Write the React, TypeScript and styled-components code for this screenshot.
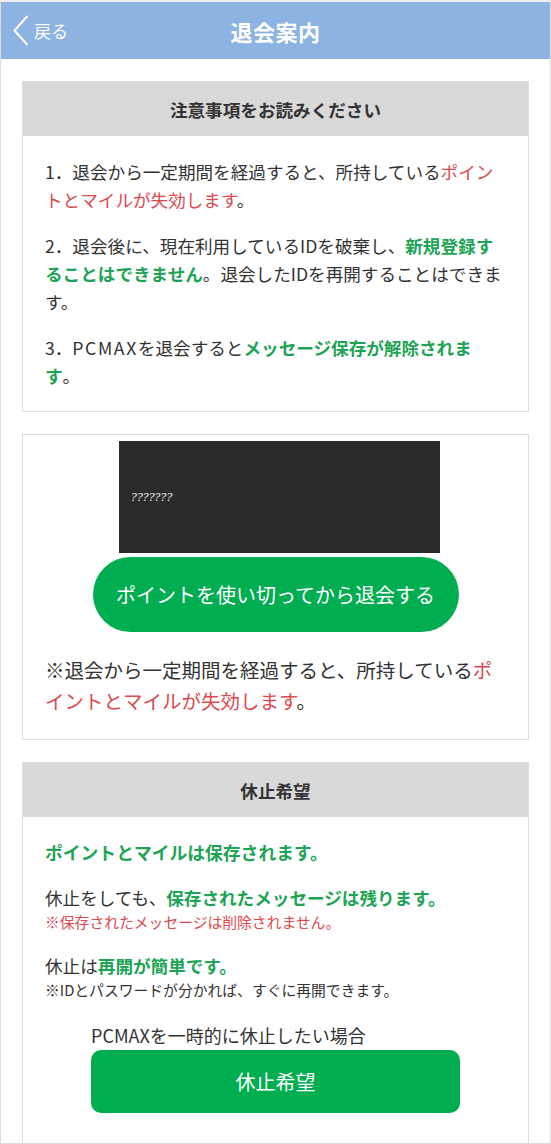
import React from "react";
import styled, { createGlobalStyle } from "styled-components";

const GlobalStyle = createGlobalStyle`
  html, body { margin: 0; padding: 0; background: #fff; }
  body {
    font-family: "Noto Sans CJK JP", "Noto Sans", sans-serif;
    color: #333;
    line-break: strict;
  }
  * { box-sizing: border-box; }
`;

const Frame = styled.div`
  width: 551px;
  height: 1144px;
  overflow: hidden;
  border: 1px solid #dcdcdc;
  border-top: 2px solid #eeeeee;
  background: #fff;
`;

const Header = styled.header`
  position: relative;
  height: 57px;
  background: #8db3e2;
  display: flex;
  align-items: center;
  justify-content: center;
`;

const Back = styled.div`
  position: absolute;
  left: 11px;
  top: 0;
  bottom: 0;
  display: flex;
  align-items: center;
  gap: 5px;
  color: #fff;
  font-size: 17px;
`;

const Title = styled.h1`
  margin: 0;
  color: #fff;
  font-size: 22px;
  font-weight: 700;
  letter-spacing: 0.5px;
`;

const Main = styled.main`
  display: flex;
  flex-direction: column;
  gap: 22px;
  padding: 22px 21px 0;
`;

const Card = styled.section`
  border: 1px solid #dedede;
  background: #fff;
`;

const CardHead = styled.div`
  height: 54px;
  background: #d9d9d9;
  display: flex;
  align-items: center;
  justify-content: center;
  font-size: 17.6px;
  font-weight: 700;
  color: #333;
`;

const List = styled.ol`
  list-style: none;
  margin: 0;
  padding: 22px 22px 21px;
  display: flex;
  flex-direction: column;
  gap: 18px;
`;

const Item = styled.li`
  font-size: 17.6px;
  line-height: 28px;
  color: #333;
`;

const Red = styled.span`
  color: #dc4a4f;
`;

const Green = styled.strong`
  color: #1ea456;
  font-weight: 700;
`;

const Latin = styled.span`
  letter-spacing: 1.6px;
`;

const CenterBody = styled.div`
  display: flex;
  flex-direction: column;
  align-items: center;
  padding: 6px 22px 23px;
`;

const Banner = styled.div`
  width: 321px;
  height: 112px;
  background: #2b2b2b;
  color: #f0f0f0;
  font-family: "DejaVu Serif", serif;
  font-style: italic;
  font-size: 11px;
  display: flex;
  align-items: center;
  padding-left: 12px;
  margin-left: 8px;
`;

const PillButton = styled.button`
  margin-top: 4px;
  width: 366px;
  height: 75px;
  border: none;
  border-radius: 38px;
  background: #00ad50;
  color: #fff;
  font-family: inherit;
  font-size: 20px;
  display: flex;
  align-items: center;
  justify-content: center;
`;

const Note = styled.p`
  align-self: stretch;
  margin: 22px 0 0;
  font-size: 19.5px;
  line-height: 31px;
  color: #333;
`;

const RestBody = styled.div`
  padding: 22px 22px 40px;
  display: flex;
  flex-direction: column;
`;

const Lead = styled.p`
  margin: 0;
  font-size: 17.8px;
  line-height: 26px;
  color: #1ea456;
  font-weight: 700;
`;

const Block = styled.div`
  margin-top: 20px;
`;

const Line = styled.p`
  margin: 0;
  font-size: 17.6px;
  line-height: 26px;
  color: #333;
`;

const Small = styled.p<{ $red?: boolean }>`
  margin: 0;
  font-size: 14.8px;
  line-height: 22px;
  color: ${(p) => (p.$red ? "#dc4a4f" : "#333")};
`;

const Action = styled.div`
  align-self: center;
  width: 369px;
  margin-top: 22px;
  display: flex;
  flex-direction: column;
  gap: 3px;
`;

const Caption = styled.div`
  font-size: 18px;
  line-height: 24px;
  color: #333;
`;

const RoundButton = styled.button`
  height: 63px;
  width: 100%;
  border: none;
  border-radius: 10px;
  background: #00ad50;
  color: #fff;
  font-family: inherit;
  font-size: 20px;
  display: flex;
  align-items: center;
  justify-content: center;
`;

const Chevron = () => (
  <svg width="17" height="31" viewBox="0 0 17 31" fill="none">
    <path d="M15 1.5 L2.5 15.5 L15 29.5" stroke="#fff" strokeWidth="2" strokeLinecap="round" strokeLinejoin="round" />
  </svg>
);

export default function App() {
  return (
    <>
      <GlobalStyle />
      <Frame>
        <Header>
          <Back>
            <Chevron />
            <span>戻る</span>
          </Back>
          <Title>退会案内</Title>
        </Header>
        <Main>
          <Card>
            <CardHead>注意事項をお読みください</CardHead>
            <List>
              <Item>
                1．退会から一定期間を経過すると、所持している<Red>ポイントとマイルが失効します</Red>。
              </Item>
              <Item>
                2．退会後に、現在利用しているIDを破棄し、<Green>新規登録することはできません</Green>。退会したIDを再開することはできます。
              </Item>
              <Item>
                3．<Latin>PCMAX</Latin>を退会すると<Green>メッセージ保存が解除されます</Green>。
              </Item>
            </List>
          </Card>
          <Card>
            <CenterBody>
              <Banner>???????</Banner>
              <PillButton>ポイントを使い切ってから退会する</PillButton>
              <Note>
                ※退会から一定期間を経過すると、所持している<Red>ポイントとマイルが失効します</Red>。
              </Note>
            </CenterBody>
          </Card>
          <Card>
            <CardHead>休止希望</CardHead>
            <RestBody>
              <Lead>ポイントとマイルは保存されます。</Lead>
              <Block>
                <Line>
                  休止をしても、<Green>保存されたメッセージは残ります。</Green>
                </Line>
                <Small $red>※保存されたメッセージは削除されません。</Small>
              </Block>
              <Block>
                <Line>
                  休止は<Green>再開が簡単です。</Green>
                </Line>
                <Small>※IDとパスワードが分かれば、すぐに再開できます。</Small>
              </Block>
              <Action>
                <Caption>PCMAXを一時的に休止したい場合</Caption>
                <RoundButton>休止希望</RoundButton>
              </Action>
            </RestBody>
          </Card>
        </Main>
      </Frame>
    </>
  );
}
